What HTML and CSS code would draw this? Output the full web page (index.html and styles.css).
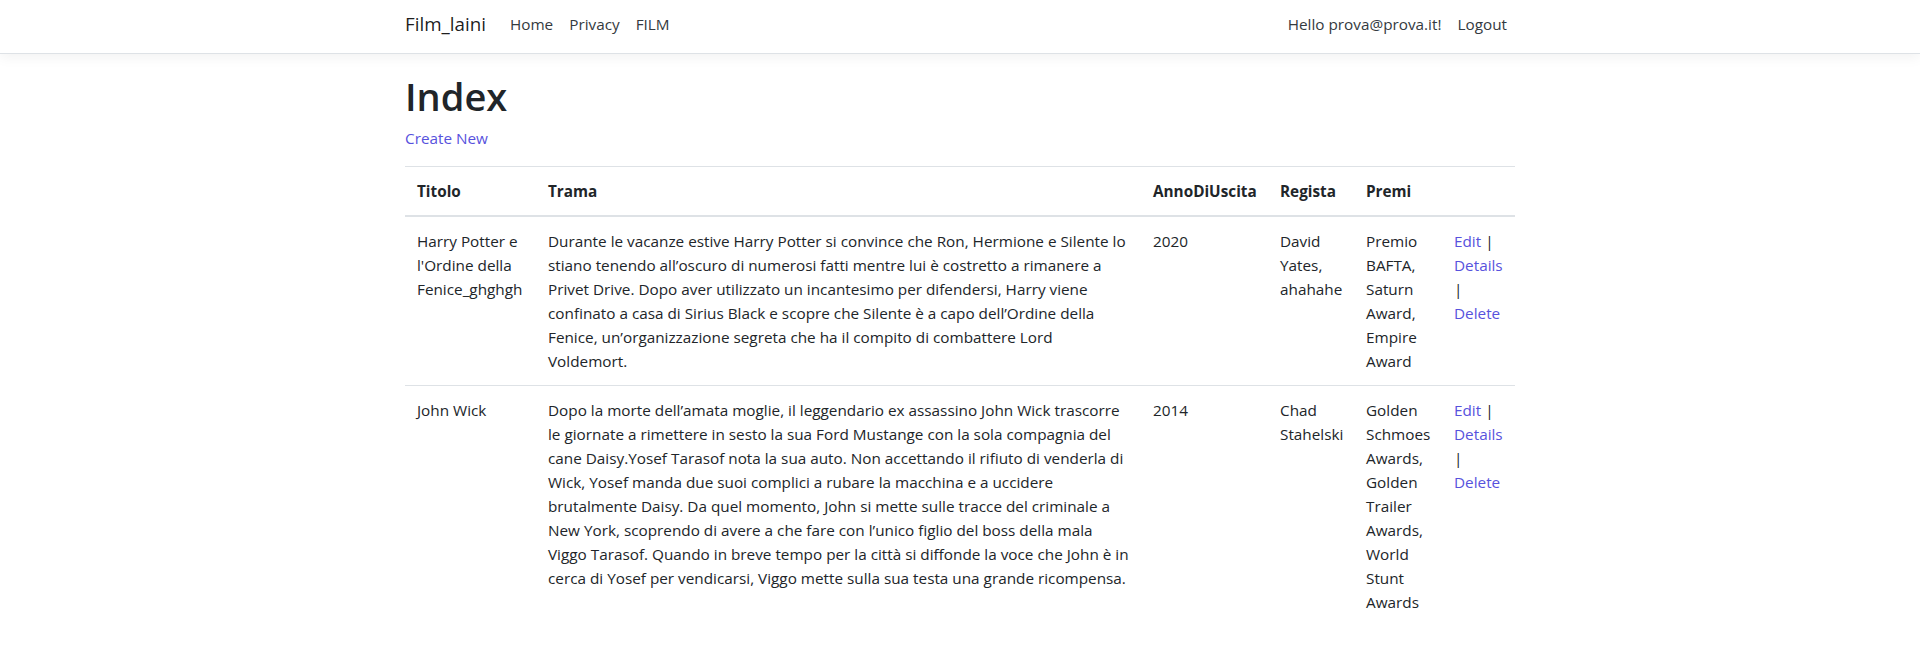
FILE: index.html
```html
<!DOCTYPE html>
<html lang="it">
<head>
<meta charset="utf-8">
<title>Index - Film_laini</title>
<link rel="stylesheet" href="styles.css">
</head>
<body>
<header class="site-header">
  <nav class="navbar">
    <div class="container nav-inner">
      <a class="brand" href="#">Film_laini</a>
      <ul class="nav nav-main">
        <li><a class="nav-link" href="#">Home</a></li>
        <li><a class="nav-link" href="#">Privacy</a></li>
        <li><a class="nav-link" href="#">FILM</a></li>
      </ul>
      <ul class="nav nav-user">
        <li><span class="nav-link">Hello prova@prova.it!</span></li>
        <li><a class="nav-link" href="#">Logout</a></li>
      </ul>
    </div>
  </nav>
</header>
<main class="container">
  <h1 class="page-title">Index</h1>
  <p class="create"><a class="link" href="#">Create New</a></p>
  <table class="table">
    <colgroup>
      <col class="c-titolo">
      <col class="c-trama">
      <col class="c-anno">
      <col class="c-regista">
      <col class="c-premi">
      <col class="c-actions">
    </colgroup>
    <thead>
      <tr>
        <th>Titolo</th>
        <th>Trama</th>
        <th>AnnoDiUscita</th>
        <th>Regista</th>
        <th>Premi</th>
        <th></th>
      </tr>
    </thead>
    <tbody>
      <tr>
        <td>Harry Potter e l'Ordine della Fenice_ghghgh</td>
        <td>Durante le vacanze estive Harry Potter si convince che Ron, Hermione e Silente lo stiano tenendo all’oscuro di numerosi fatti mentre lui è costretto a rimanere a Privet Drive. Dopo aver utilizzato un incantesimo per difendersi, Harry viene confinato a casa di Sirius Black e scopre che Silente è a capo dell’Ordine della Fenice, un’organizzazione segreta che ha il compito di combattere Lord Voldemort.</td>
        <td>2020</td>
        <td>David Yates, ahahahe</td>
        <td>Premio BAFTA, Saturn Award, Empire Award</td>
        <td><a class="link" href="#">Edit</a> | <a class="link" href="#">Details</a> | <a class="link" href="#">Delete</a></td>
      </tr>
      <tr>
        <td>John Wick</td>
        <td>Dopo la morte dell’amata moglie, il leggendario ex assassino John Wick trascorre le giornate a rimettere in sesto la sua Ford Mustange con la sola compagnia del cane Daisy.Yosef Tarasof nota la sua auto. Non accettando il rifiuto di venderla di Wick, Yosef manda due suoi complici a rubare la macchina e a uccidere brutalmente Daisy. Da quel momento, John si mette sulle tracce del criminale a New York, scoprendo di avere a che fare con l’unico figlio del boss della mala Viggo Tarasof. Quando in breve tempo per la città si diffonde la voce che John è in cerca di Yosef per vendicarsi, Viggo mette sulla sua testa una grande ricompensa.</td>
        <td>2014</td>
        <td>Chad Stahelski</td>
        <td>Golden Schmoes Awards, Golden Trailer Awards, World Stunt Awards</td>
        <td><a class="link" href="#">Edit</a> | <a class="link" href="#">Details</a> | <a class="link" href="#">Delete</a></td>
      </tr>
    </tbody>
  </table>
</main>
</body>
</html>
```

FILE: styles.css
```css
* { box-sizing: border-box; }

html, body {
  margin: 0;
  padding: 0;
}

body {
  font-family: "Open Sans", "Noto Sans", "Liberation Sans", sans-serif;
  font-size: 15.3px;
  line-height: 24px;
  color: #212529;
  background: #fff;
}

a { text-decoration: none; }

.container {
  width: 1140px;
  margin: 0 auto;
  padding: 0 15px;
}

/* Navbar */
.navbar {
  background: #fff;
  border-bottom: 1px solid #dee2e6;
  box-shadow: 0 4px 12px rgba(0, 0, 0, 0.05);
  margin-bottom: 16px;
}

.nav-inner {
  height: 53px;
  padding-top: 4px;
  display: flex;
  align-items: flex-start;
}

.brand {
  font-size: 18.8px;
  line-height: 40px;
  color: rgba(0, 0, 0, 0.9);
  margin-right: 16px;
}

.nav {
  list-style: none;
  margin: 0;
  padding: 0;
  display: flex;
  align-items: center;
}

.nav-main { flex: 1; }

.nav-link {
  display: block;
  padding: 8px;
  color: #343a40;
  font-size: 15.3px;
  line-height: 24px;
}

/* Content */
.page-title {
  font-size: 38px;
  line-height: 48px;
  font-weight: 600;
  margin: 0 0 8px;
  padding-top: 2px;
  height: 48px;
  color: #212529;
}

.create {
  margin: 0 0 16px;
}

.link { color: #5752dd; }

.table {
  width: 100%;
  border-collapse: collapse;
  table-layout: fixed;
}

.c-titolo { width: 131px; }
.c-trama { width: 605px; }
.c-anno { width: 127px; }
.c-regista { width: 86px; }
.c-premi { width: 88px; }
.c-actions { width: 73px; }

.table th,
.table td {
  padding: 12px;
  vertical-align: top;
  text-align: left;
  border-top: 1px solid #dee2e6;
}

.table th {
  font-weight: 700;
  vertical-align: bottom;
  border-bottom: 2px solid #dee2e6;
}
```
